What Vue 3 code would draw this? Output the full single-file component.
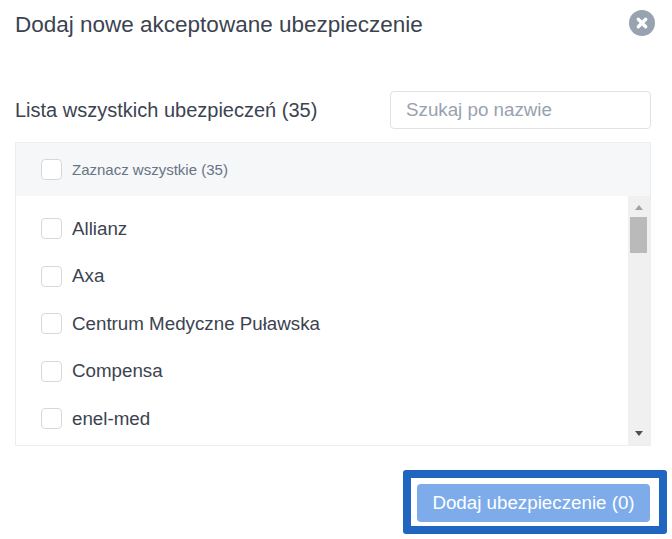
<template>
  <section class="modal">
    <header class="modal-head">
      <h1 class="modal-title">Dodaj nowe akceptowane ubezpieczenie</h1>
      <button class="close-btn" aria-label="Zamknij">
        <svg width="26" height="26" viewBox="0 0 26 26">
          <circle cx="13" cy="13" r="13" fill="#98a2b0" />
          <path d="M9.3 9.3 16.7 16.7M16.7 9.3 9.3 16.7" stroke="#fff" stroke-width="3.4" stroke-linecap="round" />
        </svg>
      </button>
    </header>

    <div class="list-head">
      <h2 class="list-title">Lista wszystkich ubezpieczeń ({{ items.length + 30 }})</h2>
      <input class="search" type="text" placeholder="Szukaj po nazwie" />
    </div>

    <div class="list-box">
      <label class="select-all">
        <span class="check"></span>
        <span>Zaznacz wszystkie (35)</span>
      </label>
      <div class="list-body">
        <ul class="items">
          <li v-for="item in items" :key="item" class="item">
            <span class="check"></span>
            <span>{{ item }}</span>
          </li>
        </ul>
        <div class="scrollbar">
          <span class="arrow up"></span>
          <span class="thumb"></span>
          <span class="track"></span>
          <span class="arrow down"></span>
        </div>
      </div>
    </div>

    <footer class="modal-foot">
      <div class="focus-frame">
        <button class="submit" disabled>Dodaj ubezpieczenie (0)</button>
      </div>
    </footer>
  </section>
</template>

<script setup>
const items = ['Allianz', 'Axa', 'Centrum Medyczne Puławska', 'Compensa', 'enel-med'];
</script>

<style scoped>
.modal {
  width: 672px;
  height: 539px;
  box-sizing: border-box;
  padding: 0 21px 0 15px;
  overflow: hidden;
  font-family: "Liberation Sans", Arial, sans-serif;
  color: #3c4350;
}

.modal-head {
  display: flex;
  align-items: center;
  justify-content: space-between;
  height: 50px;
  margin-right: -4px;
}

.modal-title {
  margin: 0;
  font-size: 22.5px;
  font-weight: 400;
  color: #3c4350;
}

.close-btn {
  display: flex;
  margin-bottom: 4px;
  padding: 0;
  border: 0;
  background: none;
}

.list-head {
  display: flex;
  align-items: center;
  justify-content: space-between;
  margin-top: 41px;
  height: 38px;
}

.list-title {
  margin: 0;
  font-size: 20px;
  font-weight: 400;
  color: #3c4350;
}

.search {
  width: 261px;
  height: 38px;
  box-sizing: border-box;
  padding: 0 15px;
  border: 1px solid #dfe2e7;
  border-radius: 4px;
  font-family: inherit;
  font-size: 18.75px;
  color: #3c4350;
}

.search::placeholder {
  color: #98a2b0;
  opacity: 1;
}

.list-box {
  margin-top: 13px;
  height: 304px;
  box-sizing: border-box;
  border: 1px solid #eceef1;
  display: flex;
  flex-direction: column;
}

.select-all {
  display: flex;
  align-items: center;
  gap: 10px;
  height: 53px;
  flex: none;
  padding-left: 25px;
  background: #f6f7f9;
  font-size: 15px;
  color: #687384;
}

.list-body {
  display: flex;
  flex: 1;
  min-height: 0;
}

.items {
  flex: 1;
  margin: 0;
  padding: 9px 0 0 25px;
  list-style: none;
}

.item {
  display: flex;
  align-items: center;
  gap: 10px;
  height: 47.5px;
  font-size: 18.75px;
  color: #3c4350;
}

.check {
  flex: none;
  width: 19px;
  height: 19px;
  border: 1px solid #d5d9df;
  border-radius: 4px;
  background: #fff;
}

.scrollbar {
  display: flex;
  flex-direction: column;
  align-items: center;
  flex: none;
  width: 22px;
  background: #f0f0f0;
}

.thumb {
  width: 17px;
  height: 36px;
  margin-right: 1px;
  background: #bababa;
}

.track {
  flex: 1;
}

.arrow {
  width: 0;
  height: 0;
  border-left: 4.5px solid transparent;
  border-right: 4.5px solid transparent;
}

.arrow.up {
  margin: 9px 0 7px;
  border-bottom: 5px solid #a3a3a3;
}

.arrow.down {
  margin-bottom: 9px;
  border-top: 5px solid #505050;
}

.modal-foot {
  display: flex;
  justify-content: flex-end;
  margin: 24px -16px 0 0;
}

.focus-frame {
  padding: 6px 9px 4px 6px;
  border: 8px solid #2065c0;
  border-radius: 3px;
  background: #fff;
}

.submit {
  display: block;
  width: 233px;
  height: 38px;
  padding: 0;
  border: 0;
  border-radius: 4px;
  background: #7eaceb;
  color: #fff;
  font-family: inherit;
  font-size: 18.75px;
}
</style>

<style>
body {
  background: #fff;
}
</style>
